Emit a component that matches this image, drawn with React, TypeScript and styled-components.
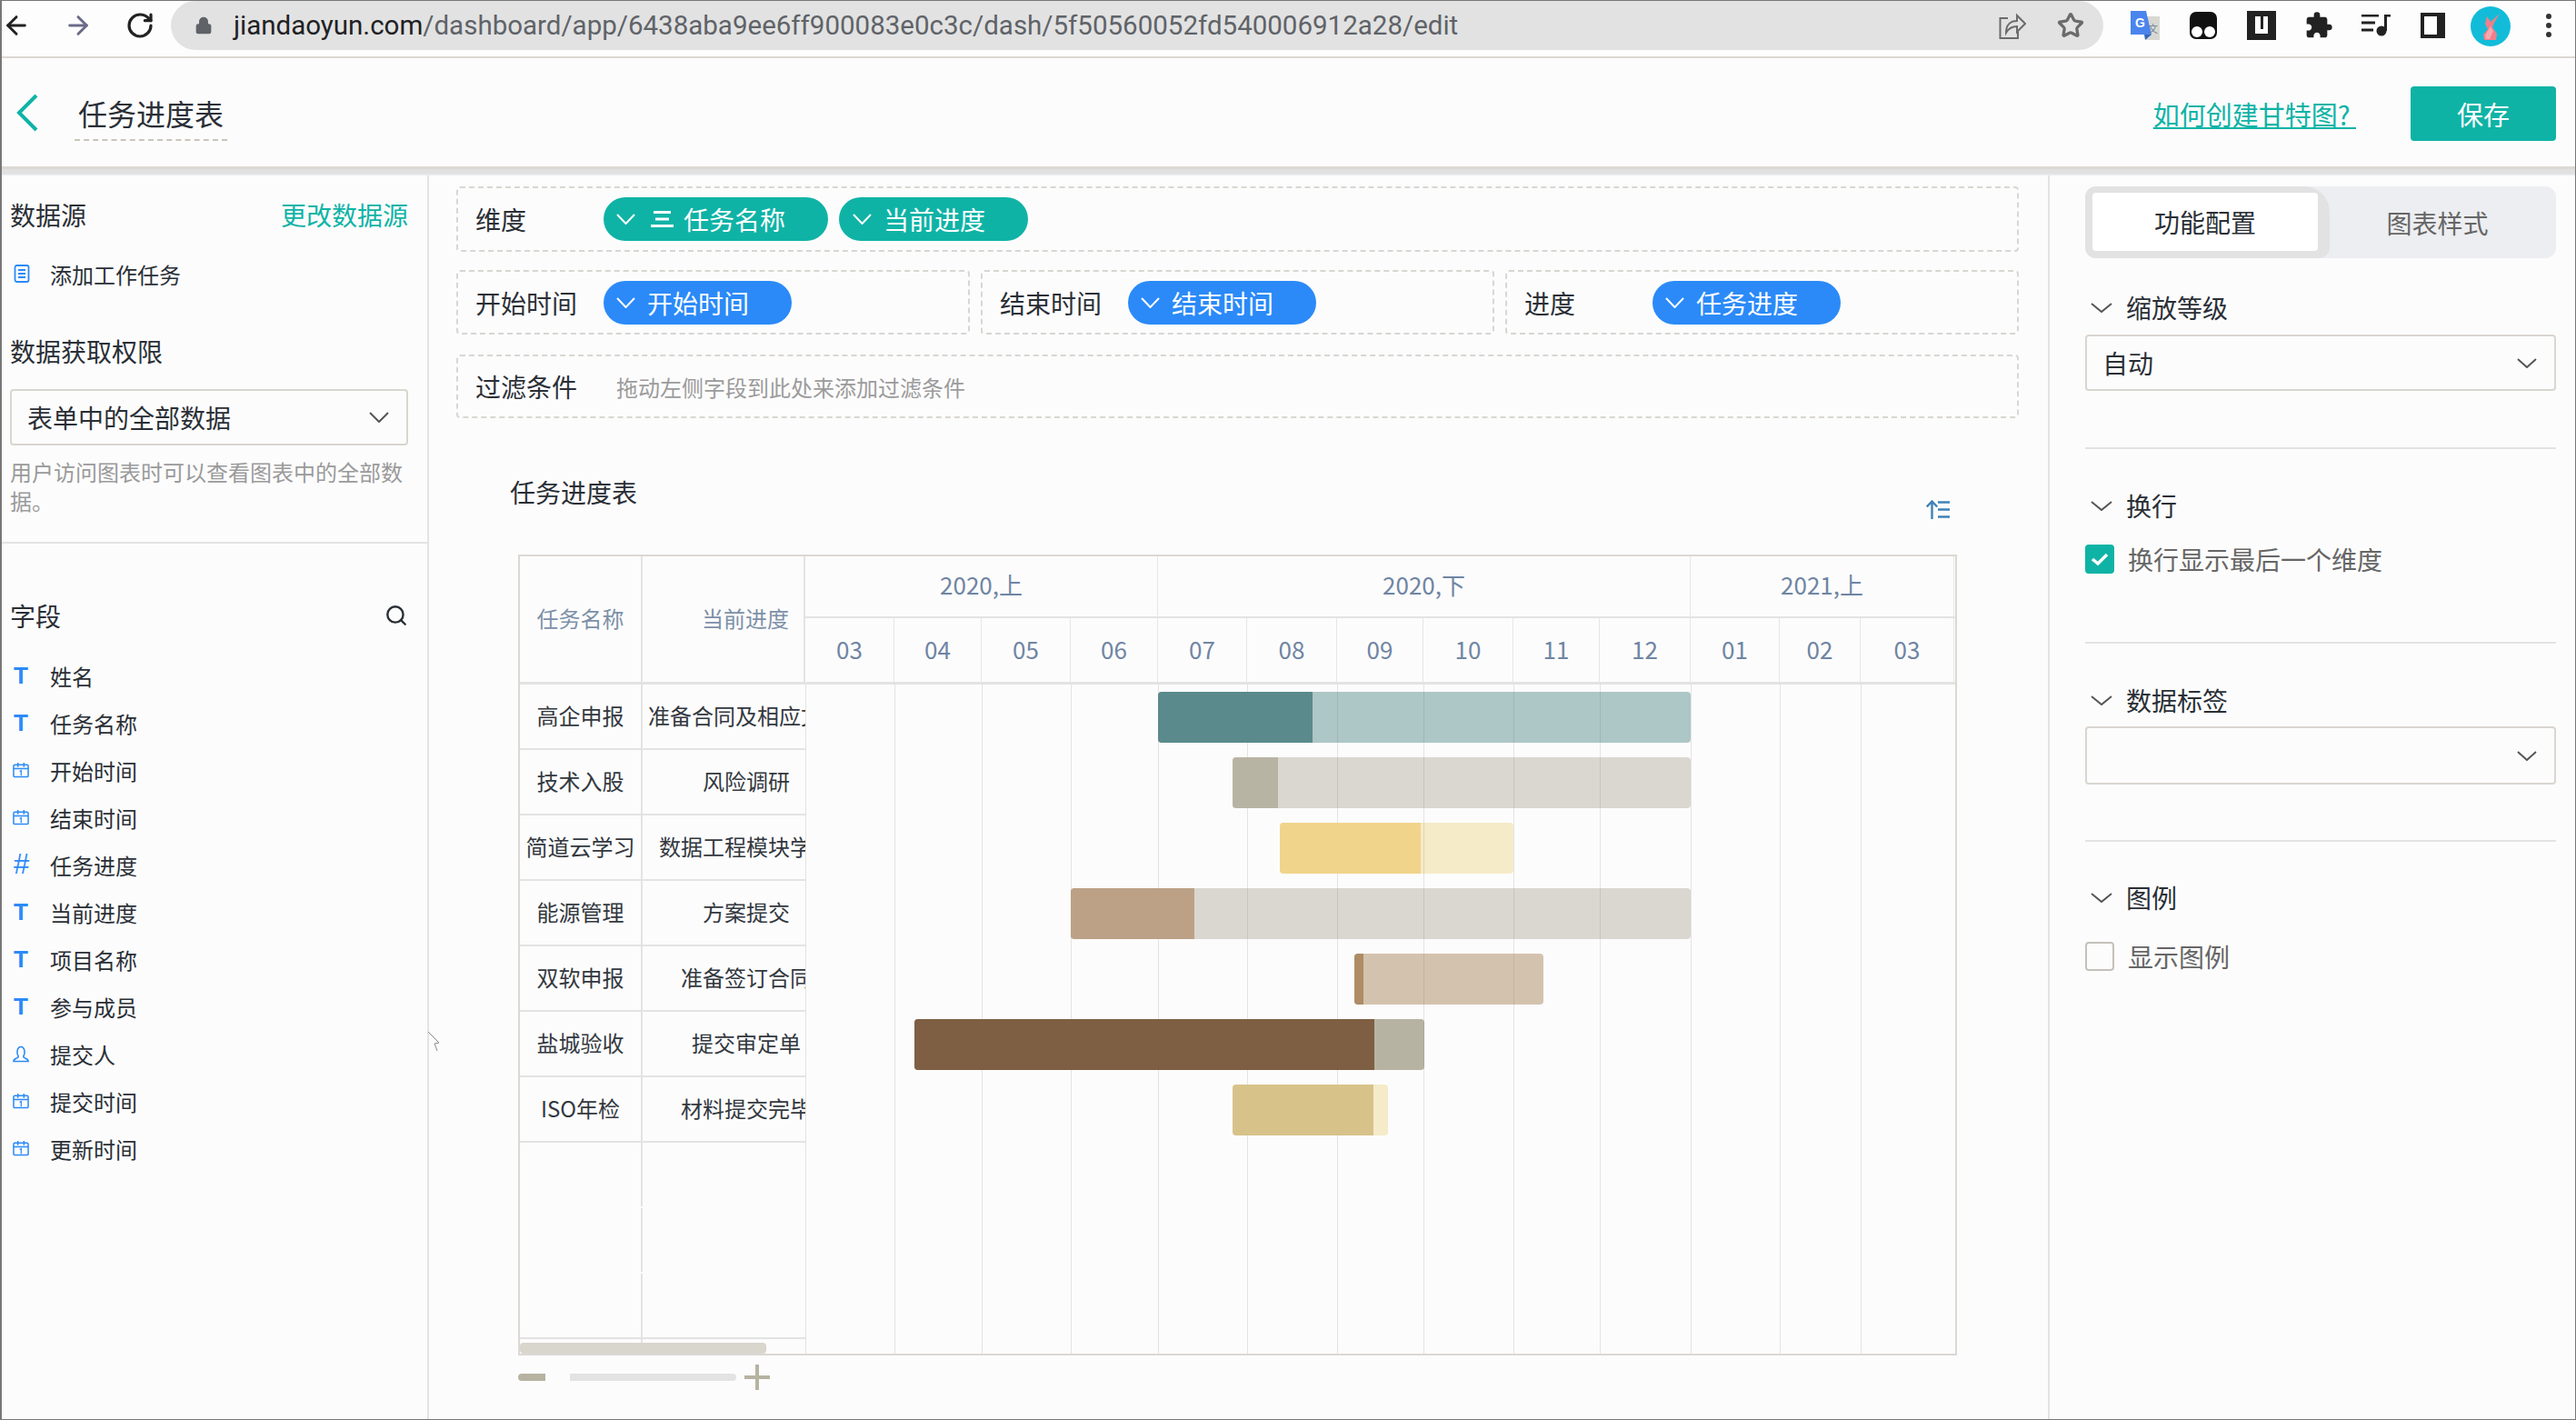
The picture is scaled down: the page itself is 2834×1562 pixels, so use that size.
import styled, { createGlobalStyle } from 'styled-components';
import { ArrowLeft, ArrowRight, RotateCw, Lock, Star, Search } from 'lucide-react';
import { MdExtension } from 'react-icons/md';

const TEAL = '#0fb3a6';
const BLUE = '#2b8af8';
const LINE = '#e3e3e3';
const TEXT = '#2a2f36';

const GlobalStyle = createGlobalStyle`
  html, body { margin: 0; padding: 0; background: #fcfcfc; }
  * { box-sizing: border-box; }
  body { font-family: "Noto Sans CJK SC", "Noto Sans", sans-serif; color: ${TEXT}; }
`;

const Page = styled.div`
  position: relative;
  width: 2834px;
  height: 1562px;
  display: flex;
  flex-direction: column;
  overflow: hidden;
  background: #fcfcfc;
  border: 1px solid #777;
  border-left-width: 2px;
`;

/* browser chrome */
const ChromeBar = styled.div`
  height: 63px;
  flex: none;
  display: flex;
  align-items: flex-start;
  border-bottom: 2px solid #dcd9d2;
  background: #fdfdfd;
`;

const NavGroup = styled.div`
  width: 186px;
  height: 54px;
  display: flex;
  align-items: center;
  gap: 36px;
  color: #222;
`;

const AddressBar = styled.div`
  width: 2126px;
  height: 54px;
  display: flex;
  align-items: center;
  padding: 0 21px 0 26px;
  background: #e2e2e2;
  border-radius: 28px;
`;

const Url = styled.div`
  flex: 1;
  margin-left: 23px;
  font-family: Roboto, sans-serif;
  font-size: 29.5px;
  color: #5f6368;
  white-space: nowrap;
`;

const UrlHost = styled.span`
  color: #202124;
`;

const BarIcons = styled.div`
  display: flex;
  align-items: center;
  gap: 34px;
  color: #6b6b6b;
`;

const Extensions = styled.div`
  height: 54px;
  margin-left: 30px;
  display: flex;
  align-items: center;
  gap: 33px;
  color: #202124;
`;

const KebabDots = styled.div`
  margin-left: 6px;
  display: flex;
  flex-direction: column;
  gap: 4px;
`;

const KebabDot = styled.span`
  width: 6px;
  height: 6px;
  border-radius: 50%;
  background: #333;
`;

/* app header */
const AppHeader = styled.header`
  height: 122px;
  flex: none;
  display: flex;
  align-items: center;
  padding: 0 21px 0 16px;
  border-bottom: 3px solid #dcd9d2;
`;

const TitleEdit = styled.div`
  margin: 7px 0 0 40px;
  padding: 0 4px 4px;
  font-size: 32px;
  line-height: 50px;
  border-bottom: 2px dashed #c9c5bb;
`;

const HelpLink = styled.a`
  margin: 2px 0 0 auto;
  font-size: 29px;
  line-height: 40px;
  color: ${TEAL};
  text-decoration: underline;
  white-space: pre;
`;

const SaveButton = styled.button`
  width: 160px;
  height: 60px;
  margin: 2px 0 0 60px;
  border: 0;
  border-radius: 4px;
  background: ${TEAL};
  color: #fff;
  font: inherit;
  font-size: 29px;
`;

const Strip = styled.div`
  height: 7px;
  flex: none;
  background: linear-gradient(#e1e1e1 70%, #eef2f4);
`;

const Workspace = styled.div`
  flex: 1;
  min-height: 0;
  display: flex;
`;

/* left sidebar */
const Sidebar = styled.aside`
  width: 470px;
  flex: none;
  border-right: 2px solid ${LINE};
`;

const SourceBlock = styled.div`
  padding: 23px 21px 29px 9px;
  border-bottom: 2px solid ${LINE};
`;

const SideHeading = styled.div<{ $top?: number }>`
  margin-top: ${({ $top }) => $top ?? 0}px;
  display: flex;
  align-items: center;
  justify-content: space-between;
  height: 40px;
  font-size: 28px;
`;

const TealLink = styled.span`
  color: ${TEAL};
`;

const SourceRow = styled.div`
  margin-top: 25px;
  height: 40px;
  display: flex;
  align-items: center;
  gap: 22px;
  padding-left: 4px;
  font-size: 24px;
`;

const SelectBox = styled.div<{ $h: number; $top: number }>`
  height: ${({ $h }) => $h}px;
  margin-top: ${({ $top }) => $top}px;
  display: flex;
  align-items: center;
  justify-content: space-between;
  padding: 0 19px 0 17px;
  border: 2px solid #d9d6d0;
  border-radius: 4px;
  font-size: 28px;
`;

const Hint = styled.p`
  margin: 13px 0 0;
  font-size: 24px;
  line-height: 32px;
  color: #9a9a9a;
`;

const FieldBlock = styled.div`
  padding: 59px 21px 0 9px;
`;

const FieldList = styled.ul`
  margin: 20px 0 0;
  padding: 0;
  list-style: none;
`;

const FieldRow = styled.li`
  height: 52px;
  display: flex;
  align-items: center;
  font-size: 24px;
`;

const FieldIconSlot = styled.span`
  width: 18px;
  margin: 0 23px 0 3px;
  display: flex;
  justify-content: center;
  color: ${BLUE};
  font-family: "Liberation Sans", sans-serif;
  font-size: 26px;
  line-height: 1;
`;

const GlyphT = styled.span`
  font-weight: 700;
`;

const GlyphHash = styled.span`
  font-size: 31px;
  font-style: italic;
  line-height: 26px;
`;

/* centre */
const Main = styled.main`
  flex: 1;
  min-width: 0;
  padding: 12px 32px 0 30px;
`;

const DropBox = styled.div<{ $h: number }>`
  height: ${({ $h }) => $h}px;
  display: flex;
  align-items: center;
  padding-left: 19px;
  border: 2px dashed #d9d6d2;
  border-radius: 4px;
`;

const DropGrid = styled.div`
  margin: 20px 0 22px;
  display: grid;
  grid-template-columns: repeat(3, 1fr);
  gap: 12px;
`;

const DropLabel = styled.span`
  width: 141px;
  flex: none;
  font-size: 28px;
`;

const Pill = styled.span<{ $color: string; $left?: number }>`
  height: 48px;
  margin-right: 12px;
  display: inline-flex;
  align-items: center;
  gap: 13px;
  padding: 0 47px 0 ${({ $left }) => $left ?? 14}px;
  border-radius: 24px;
  background: ${({ $color }) => $color};
  color: #fff;
  font-size: 28px;
`;

const Placeholder = styled.span`
  margin-left: 14px;
  font-size: 24px;
  color: #9b9b9b;
`;

const ChartHead = styled.div`
  height: 89px;
  margin-top: 61px;
  display: flex;
  justify-content: space-between;
  padding: 0 76px 0 59px;
  font-size: 28px;
  line-height: 40px;
`;

const SortIcon = styled.svg`
  margin-top: 29px;
`;

const GanttFrame = styled.div`
  position: relative;
  width: 1583px;
  height: 881px;
  margin-left: 68px;
  display: flex;
  flex-direction: column;
  border: 2px solid #dcd8d3;
`;

const GanttHead = styled.div`
  height: 141px;
  flex: none;
  display: flex;
  border-bottom: 3px solid ${LINE};
`;

const HeadCell = styled.div<{ $w: number; $pad?: number }>`
  width: ${({ $w }) => $w}px;
  flex: none;
  display: flex;
  align-items: center;
  justify-content: center;
  padding: 0 0 4px ${({ $pad }) => $pad ?? 0}px;
  border-right: 2px solid ${LINE};
  font-size: 24px;
  color: #7d90a8;
`;

const Timeline = styled.div`
  flex: 1;
  display: flex;
  flex-direction: column;
  color: #6f85a3;
  font-size: 26px;
`;

const TimeRow = styled.div<{ $h: number; $line?: boolean; $lift: number }>`
  height: ${({ $h }) => $h}px;
  display: flex;
  padding-bottom: 0;
  border-bottom: ${({ $line }) => ($line ? `2px solid ${LINE}` : '0')};
  --lift: ${({ $lift }) => $lift}px;
`;

const TimeCell = styled.div<{ $w: number }>`
  width: ${({ $w }) => $w}px;
  flex: none;
  display: flex;
  align-items: center;
  justify-content: center;
  padding-bottom: var(--lift);
  border-right: 1px solid #e6e6e6;
`;

const GanttBody = styled.div`
  flex: 1;
  min-height: 0;
  display: flex;
`;

const LabelPane = styled.div`
  width: 314px;
  flex: none;
  display: flex;
  flex-direction: column;
`;

const LabelRow = styled.div<{ $plain?: boolean; $fill?: boolean }>`
  height: 72px;
  display: flex;
  flex: ${({ $fill }) => ($fill ? 1 : 'none')};
  border-bottom: ${({ $plain }) => ($plain ? '2px solid transparent' : `2px solid ${LINE}`)};
  font-size: 24px;
  color: #33383f;
`;

const TaskCell = styled.div`
  width: 135px;
  flex: none;
  display: flex;
  align-items: center;
  justify-content: center;
  padding-bottom: 3px;
  border-right: 2px solid ${LINE};
  white-space: nowrap;
`;

const StageCell = styled.div`
  width: 179px;
  flex: none;
  overflow: hidden;
  display: flex;
  align-items: center;
  padding-bottom: 3px;
`;

const StageText = styled.span`
  width: 228px;
  flex: none;
  text-align: center;
  white-space: nowrap;
`;

const Track = styled.div`
  position: relative;
  flex: 1;
`;

const GridLine = styled.span`
  position: absolute;
  top: 0;
  bottom: 0;
  width: 1px;
  background: rgba(110, 100, 90, 0.16);
  z-index: 2;
`;

const BarBase = styled.div`
  position: absolute;
  height: 56px;
  border-radius: 4px;
  z-index: 1;
`;

const BarDone = styled.div`
  position: absolute;
  height: 56px;
  border-radius: 4px 0 0 4px;
  z-index: 3;
`;

const HScroll = styled.div`
  position: absolute;
  left: 0;
  bottom: 0;
  width: 271px;
  height: 12px;
  border-radius: 4px;
  background: #d9d6ce;
  z-index: 4;
`;

const ZoomBar = styled.div`
  height: 28px;
  margin: 10px 0 0 68px;
  display: flex;
  align-items: center;
`;

const ZoomOut = styled.span`
  width: 30px;
  height: 8px;
  border-radius: 4px 0 0 4px;
  background: #b7b3a2;
`;

const ZoomTrack = styled.span`
  width: 183px;
  height: 8px;
  margin: 0 9px 0 27px;
  border-radius: 0 4px 4px 0;
  background: ${LINE};
`;

/* right panel */
const SidePanel = styled.aside`
  width: 580px;
  flex: none;
  padding: 12px 21px 0 39px;
  border-left: 2px solid ${LINE};
`;

const Tabs = styled.div`
  height: 79px;
  display: flex;
  border-radius: 12px;
  background: #edeef1;
  font-size: 28px;
`;

const ActiveTabWell = styled.div`
  width: 269px;
  padding: 7px 13px 8px 8px;
  border-radius: 12px 28px 12px 12px;
  background: #e2e2e2;
  display: flex;
`;

const ActiveTab = styled.div`
  flex: 1;
  display: flex;
  align-items: center;
  justify-content: center;
  border-radius: 4px;
  background: #fff;
`;

const IdleTab = styled.div`
  flex: 1;
  display: flex;
  align-items: center;
  justify-content: center;
  padding-right: 12px;
  color: #666;
`;

const SectionHead = styled.div<{ $top: number }>`
  height: 40px;
  margin-top: ${({ $top }) => $top}px;
  display: flex;
  align-items: center;
  gap: 15px;
  padding-left: 6px;
  font-size: 28px;
`;

const Divider = styled.div<{ $top: number }>`
  height: 2px;
  margin-top: ${({ $top }) => $top}px;
  background: ${LINE};
`;

const CheckRow = styled.div<{ $top: number }>`
  height: 32px;
  margin-top: ${({ $top }) => $top}px;
  display: flex;
  align-items: center;
  gap: 15px;
  font-size: 28px;
  color: #666;
`;

const CheckBox = styled.span<{ $on?: boolean }>`
  width: 32px;
  height: 32px;
  display: flex;
  align-items: center;
  justify-content: center;
  border-radius: 4px;
  border: 2px solid ${({ $on }) => ($on ? TEAL : '#c4c1ba')};
  background: ${({ $on }) => ($on ? TEAL : 'transparent')};
`;

const DragCursor = styled.svg`
  position: absolute;
  left: 468px;
  top: 1133px;
`;

const Chevron = ({ w, h, color, sw = 2 }: { w: number; h: number; color: string; sw?: number }) => (
  <svg width={w} height={h} viewBox={`0 0 ${w} ${h}`} style={{ flex: 'none' }}>
    <polyline points={`1,1 ${w / 2},${h - 1} ${w - 1},1`} fill="none" stroke={color} strokeWidth={sw} />
  </svg>
);

const CalendarIcon = () => (
  <svg width="19" height="18" viewBox="0 0 19 18" fill="none" stroke={BLUE} strokeWidth="1.6">
    <rect x="1" y="3" width="17" height="14" rx="1.5" />
    <path d="M1 7.500h17M6 0.500v5M13 0.500v5" />
    <path d="M8 10.500l1.800-1v6" strokeWidth="1.3" />
  </svg>
);

const UserIcon = () => (
  <svg width="19" height="19" viewBox="0 0 19 19" fill="none" stroke={BLUE} strokeWidth="1.7">
    <path d="M6.300 11.500C4.500 9.500 4.600 1 9.500 1s5 8.500 3.200 10.500c-.7 1 .1 2 1.400 2.600 2 1 3.900 1.300 3.900 3.900H1c0-2.600 1.900-2.900 3.900-3.900 1.300-.6 2.100-1.600 1.400-2.600z" />
  </svg>
);

const DocIcon = () => (
  <svg width="18" height="20" viewBox="0 0 18 20" fill="none" stroke={BLUE} strokeWidth="1.8">
    <rect x="1.500" y="1" width="15" height="18" rx="2" />
    <path d="M5 6h8M5 10h8M5 14h8" />
  </svg>
);

const ListLines = () => (
  <svg width="25" height="18" viewBox="0 0 25 18" fill="#fff" style={{ flex: 'none', margin: '0 -2px 0 4px' }}>
    <rect x="3" y="0" width="19" height="3" />
    <rect x="5" y="7.500" width="15" height="3" />
    <rect x="0" y="15" width="25" height="3" />
  </svg>
);

type FieldKind = 'text' | 'date' | 'num' | 'user';

const fields: [FieldKind, string][] = [
  ['text', '姓名'],
  ['text', '任务名称'],
  ['date', '开始时间'],
  ['date', '结束时间'],
  ['num', '任务进度'],
  ['text', '当前进度'],
  ['text', '项目名称'],
  ['text', '参与成员'],
  ['user', '提交人'],
  ['date', '提交时间'],
  ['date', '更新时间'],
];

const FieldGlyph = ({ kind }: { kind: FieldKind }) => {
  if (kind === 'text') return <GlyphT>T</GlyphT>;
  if (kind === 'num') return <GlyphHash>#</GlyphHash>;
  if (kind === 'user') return <UserIcon />;
  return <CalendarIcon />;
};

// page x of every month boundary, the track starts at the first one
const monthEdges = [886, 984, 1080, 1178, 1274, 1372, 1471, 1566, 1665, 1760, 1860, 1958, 2047, 2150];
const months = ['03', '04', '05', '06', '07', '08', '09', '10', '11', '12', '01', '02', '03'];
const halves = [
  { label: '2020,上', w: 388 },
  { label: '2020,下', w: 586 },
  { label: '2021,上', w: 290 },
];

const tasks = [
  { name: '高企申报', stage: '准备合同及相应文件', from: 1274, done: 1444, to: 1860, dark: '#5a8a8b', light: '#adc6c6' },
  { name: '技术入股', stage: '风险调研', from: 1356, done: 1406, to: 1860, dark: '#b8b4a4', light: '#dad7d0' },
  { name: '简道云学习', stage: '数据工程模块学习', from: 1408, done: 1563, to: 1665, dark: '#f1d48c', light: '#f6ebc8' },
  { name: '能源管理', stage: '方案提交', from: 1178, done: 1314, to: 1860, dark: '#bca186', light: '#dad7d0' },
  { name: '双软申报', stage: '准备签订合同', from: 1490, done: 1500, to: 1698, dark: '#ae8c65', light: '#d3c3ae' },
  { name: '盐城验收', stage: '提交审定单', from: 1006, done: 1512, to: 1567, dark: '#7e5f43', light: '#b7b3a3' },
  { name: 'ISO年检', stage: '材料提交完毕', from: 1356, done: 1511, to: 1527, dark: '#d7c28a', light: '#f6ebc8' },
];

const TRACK_X = 886;

export default function App() {
  return (
    <Page>
      <GlobalStyle />
      <ChromeBar>
        <NavGroup>
          <ArrowLeft size={32} strokeWidth={2.2} />
          <ArrowRight size={32} strokeWidth={2.2} color="#6a6a8a" />
          <RotateCw size={32} strokeWidth={2.4} />
        </NavGroup>
        <AddressBar>
          <Lock size={20} fill="#5f6368" color="#5f6368" />
          <Url>
            <UrlHost>jiandaoyun.com</UrlHost>/dashboard/app/6438aba9ee6ff900083e0c3c/dash/5f50560052fd540006912a28/edit
          </Url>
          <BarIcons>
            <svg width="30" height="29" viewBox="0 0 30 29" fill="none" stroke="#6b6b6b" strokeWidth="2">
              <path d="M10 6H1.500v22H21v-7" />
              <path d="M8 22c0-9 5-13 12-13V3l9 9-9 9v-6c-5 0-9 2-12 7z" />
            </svg>
            <Star size={30} strokeWidth={2.6} />
          </BarIcons>
        </AddressBar>
        <Extensions>
          <svg width="32" height="32" viewBox="0 0 32 32">
            <rect x="17" y="6" width="15" height="26" fill="#d8d8d2" />
            <path d="M0 0h17l6 26H0z" fill="#4a85ee" />
            <path d="M15 26h8l-7 6z" fill="#3566b8" />
            <text x="5" y="18" fontSize="14" fontWeight="700" fill="#fff" fontFamily="Liberation Sans">G</text>
            <text x="19" y="24" fontSize="11" fill="#6b7f99" fontFamily="Noto Sans CJK SC">文</text>
          </svg>
          <svg width="30" height="30" viewBox="0 0 30 30">
            <rect width="30" height="30" rx="7" fill="#111" />
            <circle cx="8" cy="22" r="6" fill="#fff" />
            <circle cx="22" cy="22" r="6" fill="#fff" />
          </svg>
          <svg width="32" height="32" viewBox="0 0 32 32">
            <rect width="32" height="32" fill="#222" />
            <rect x="9" y="6" width="14" height="19" fill="#fff" />
            <rect x="15" y="6" width="3" height="14" fill="#222" />
          </svg>
          <MdExtension size={32} color="#222" style={{ margin: '0 -2px' }} />
          <svg width="32" height="24" viewBox="0 0 32 24">
            <path d="M0 1h19M0 9h15M0 17h13" stroke="#222" strokeWidth="3" />
            <path d="M26.500 18V1H32" fill="none" stroke="#222" strokeWidth="3" />
            <circle cx="22" cy="18" r="5.500" fill="#222" />
          </svg>
          <svg width="27" height="28" viewBox="0 0 27 28">
            <rect width="27" height="28" fill="#222" />
            <rect x="4" y="4" width="14" height="20" fill="#fff" />
          </svg>
          <svg width="44" height="44" viewBox="0 0 44 44" style={{ marginLeft: -5, marginTop: 1 }}>
            <circle cx="22" cy="22" r="22" fill="#12bcd9" />
            <path d="M18 11l4 6 10-9-6 10-2 5 5 7-1 7H15l-1-6 5-6-3-6 2-8z" fill="#ef7f8a" />
            <path d="M22 22l3 5-4 9h-4l-1-4z" fill="#f7a8ad" />
          </svg>
          <KebabDots>
            <KebabDot />
            <KebabDot />
            <KebabDot />
          </KebabDots>
        </Extensions>
      </ChromeBar>

      <AppHeader>
        <svg width="24" height="42" viewBox="0 0 24 42" fill="none" stroke={TEAL} strokeWidth="4">
          <polyline points="22,2 3,21 22,40" />
        </svg>
        <TitleEdit>任务进度表</TitleEdit>
        <HelpLink>如何创建甘特图? </HelpLink>
        <SaveButton>保存</SaveButton>
      </AppHeader>
      <Strip />

      <Workspace>
        <Sidebar>
          <SourceBlock>
            <SideHeading>
              数据源
              <TealLink>更改数据源</TealLink>
            </SideHeading>
            <SourceRow>
              <DocIcon />
              添加工作任务
            </SourceRow>
            <SideHeading $top={45}>数据获取权限</SideHeading>
            <SelectBox $h={62} $top={22}>
              表单中的全部数据
              <Chevron w={22} h={12} color="#555" />
            </SelectBox>
            <Hint>用户访问图表时可以查看图表中的全部数据。</Hint>
          </SourceBlock>
          <FieldBlock>
            <SideHeading>
              字段
              <Search size={26} strokeWidth={2.2} />
            </SideHeading>
            <FieldList>
              {fields.map(([kind, label]) => (
                <FieldRow key={label}>
                  <FieldIconSlot>
                    <FieldGlyph kind={kind} />
                  </FieldIconSlot>
                  {label}
                </FieldRow>
              ))}
            </FieldList>
          </FieldBlock>
        </Sidebar>

        <Main>
          <DropBox $h={72}>
            <DropLabel>维度</DropLabel>
            <Pill $color={TEAL}>
              <Chevron w={21} h={12} color="#fff" />
              <ListLines />
              任务名称
            </Pill>
            <Pill $color={TEAL} $left={15}>
              <Chevron w={21} h={12} color="#fff" />
              当前进度
            </Pill>
          </DropBox>
          <DropGrid>
            <DropBox $h={71}>
              <DropLabel>开始时间</DropLabel>
              <Pill $color={BLUE}>
                <Chevron w={21} h={12} color="#fff" />
                开始时间
              </Pill>
            </DropBox>
            <DropBox $h={71}>
              <DropLabel>结束时间</DropLabel>
              <Pill $color={BLUE}>
                <Chevron w={21} h={12} color="#fff" />
                结束时间
              </Pill>
            </DropBox>
            <DropBox $h={71}>
              <DropLabel>进度</DropLabel>
              <Pill $color={BLUE}>
                <Chevron w={21} h={12} color="#fff" />
                任务进度
              </Pill>
            </DropBox>
          </DropGrid>
          <DropBox $h={70}>
            <DropLabel>过滤条件</DropLabel>
            <Placeholder>拖动左侧字段到此处来添加过滤条件</Placeholder>
          </DropBox>

          <ChartHead>
            任务进度表
            <SortIcon width="26" height="21" viewBox="0 0 26 21" fill="none" stroke="#3f82b8" strokeWidth="2.400">
              <path d="M6.500 21V1.500M0.800 7.500L6.500 1.500l5.700 6" />
              <path d="M13 2.500h13M13 10.500h13M13 18.500h13" />
            </SortIcon>
          </ChartHead>

          <GanttFrame>
            <GanttHead>
              <HeadCell $w={135}>任务名称</HeadCell>
              <HeadCell $w={179} $pad={49}>当前进度</HeadCell>
              <Timeline>
                <TimeRow $h={68} $line $lift={6}>
                  {halves.map((h) => (
                    <TimeCell key={h.label} $w={h.w}>{h.label}</TimeCell>
                  ))}
                </TimeRow>
                <TimeRow $h={70} $lift={3}>
                  {months.map((m, i) => (
                    <TimeCell key={i} $w={monthEdges[i + 1] - monthEdges[i]}>{m}</TimeCell>
                  ))}
                </TimeRow>
              </Timeline>
            </GanttHead>
            <GanttBody>
              <LabelPane>
                {tasks.map((t) => (
                  <LabelRow key={t.name}>
                    <TaskCell>{t.name}</TaskCell>
                    <StageCell>
                      <StageText>{t.stage}</StageText>
                    </StageCell>
                  </LabelRow>
                ))}
                <LabelRow $plain>
                  <TaskCell />
                  <StageCell />
                </LabelRow>
                <LabelRow $plain>
                  <TaskCell />
                  <StageCell />
                </LabelRow>
                <LabelRow>
                  <TaskCell />
                  <StageCell />
                </LabelRow>
                <LabelRow $plain $fill>
                  <TaskCell />
                  <StageCell />
                </LabelRow>
              </LabelPane>
              <Track>
                {tasks.map((t, i) => (
                  <BarBase
                    key={t.name}
                    style={{ left: t.from - TRACK_X, width: t.to - t.from, top: 8 + i * 72, background: t.light }}
                  />
                ))}
                {monthEdges.slice(0, -1).map((x) => (
                  <GridLine key={x} style={{ left: x - TRACK_X }} />
                ))}
                {tasks.map((t, i) => (
                  <BarDone
                    key={t.name}
                    style={{ left: t.from - TRACK_X, width: t.done - t.from, top: 8 + i * 72, background: t.dark }}
                  />
                ))}
              </Track>
            </GanttBody>
            <HScroll />
          </GanttFrame>
          <ZoomBar>
            <ZoomOut />
            <ZoomTrack />
            <svg width="28" height="28" viewBox="0 0 28 28" fill="#b7b3a2">
              <rect x="0" y="12" width="28" height="4" />
              <rect x="12" y="0" width="4" height="28" />
            </svg>
          </ZoomBar>
        </Main>

        <SidePanel>
          <Tabs>
            <ActiveTabWell>
              <ActiveTab>功能配置</ActiveTab>
            </ActiveTabWell>
            <IdleTab>图表样式</IdleTab>
          </Tabs>

          <SectionHead $top={34}>
            <Chevron w={24} h={11} color="#555" />
            缩放等级
          </SectionHead>
          <SelectBox $h={62} $top={10}>
            自动
            <Chevron w={22} h={11} color="#555" />
          </SelectBox>
          <Divider $top={62} />

          <SectionHead $top={42}>
            <Chevron w={24} h={11} color="#555" />
            换行
          </SectionHead>
          <CheckRow $top={23}>
            <CheckBox $on>
              <svg width="20" height="16" viewBox="0 0 20 16" fill="none" stroke="#fff" strokeWidth="3.500">
                <polyline points="2,8 8,13 18,3" />
              </svg>
            </CheckBox>
            换行显示最后一个维度
          </CheckRow>
          <Divider $top={75} />

          <SectionHead $top={42}>
            <Chevron w={24} h={11} color="#555" />
            数据标签
          </SectionHead>
          <SelectBox $h={64} $top={9}>
            <span />
            <Chevron w={22} h={11} color="#555" />
          </SelectBox>
          <Divider $top={61} />

          <SectionHead $top={41}>
            <Chevron w={24} h={11} color="#555" />
            图例
          </SectionHead>
          <CheckRow $top={29}>
            <CheckBox />
            显示图例
          </CheckRow>
        </SidePanel>
      </Workspace>

      <DragCursor width="14" height="24" viewBox="0 0 14 24" fill="none" stroke="#888" strokeWidth="1">
        <path d="M1 1l12 12-5 1 3 8" />
      </DragCursor>
    </Page>
  );
}
